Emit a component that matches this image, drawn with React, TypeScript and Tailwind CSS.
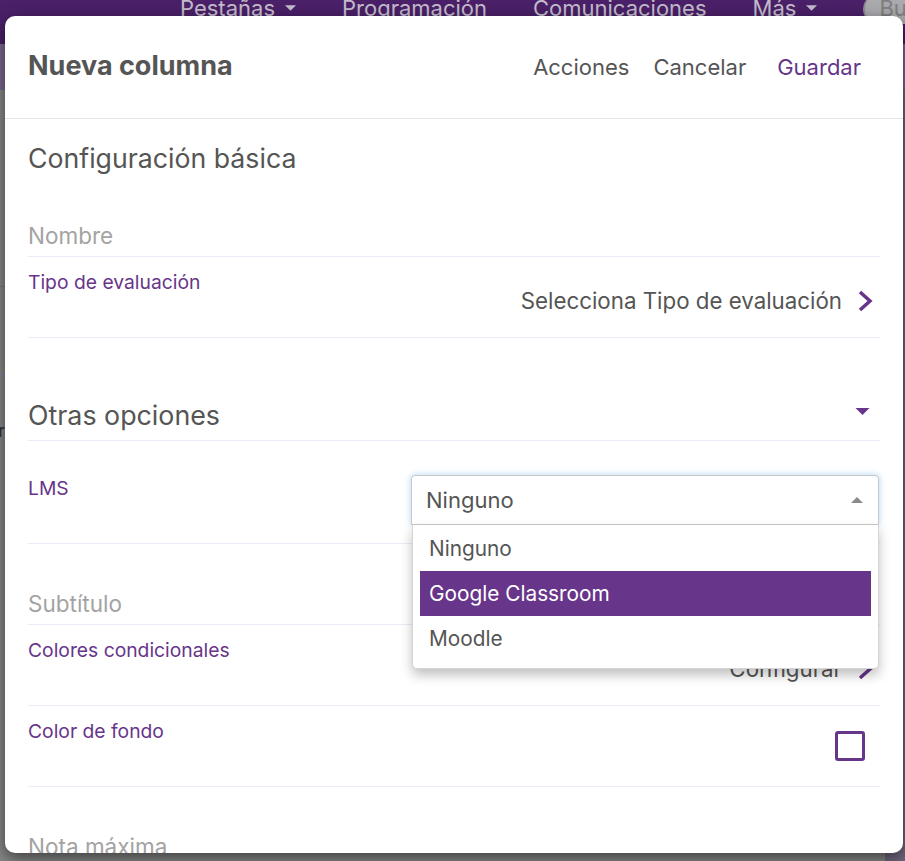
import { useState } from "react";

function TriangleDown({ className }: { className?: string }) {
  return (
    <svg viewBox="0 0 14 7" className={className} fill="currentColor">
      <path d="M0 0h14L7 7z" />
    </svg>
  );
}

function ChevronRight() {
  return (
    <svg viewBox="0 0 16 22" className="w-[16px] h-[22px] text-[#673589]" fill="none" stroke="currentColor" strokeWidth="3.5">
      <path d="M3 2l10 9-10 9" />
    </svg>
  );
}

export default function App() {
  const [lms, setLms] = useState("Ninguno");
  const [open, setOpen] = useState(true);
  const [bg, setBg] = useState(false);
  const options = ["Ninguno", "Google Classroom", "Moodle"];
  const hovered = "Google Classroom";

  return (
    <div className="relative w-[905px] h-[861px] overflow-hidden bg-[#878787] font-['Inter',sans-serif]">
      {/* dimmed page behind the dialog */}
      <div className="flex flex-col h-full">
        <div className="h-[44px] flex-none bg-[#4a2068] flex items-start pl-[180px] gap-[46px] text-[22px] leading-[28px] text-[#c3bccb] whitespace-nowrap">
          <span className="-mt-[6px] flex items-center gap-[10px]">
            Pestañas <TriangleDown className="w-[11px] h-[6px]" />
          </span>
          <span className="-mt-[6px]">Programación</span>
          <span className="-mt-[6px]">Comunicaciones</span>
          <span className="-mt-[6px] flex items-center gap-[10px]">
            Más <TriangleDown className="w-[11px] h-[6px]" />
          </span>
          <span className="-mt-[6px] flex-none h-[30px] w-[120px] rounded-full bg-[#aaa9ad] border-l-2 border-[#8d8a92] pl-[14px] text-[#7f7f7f]">
            Buscar
          </span>
        </div>
        <div className="h-[46px] flex-none bg-[#7b6891]" />
        <div className="flex-1 flex">
          <div className="flex-1 flex flex-col">
            <div className="h-[197px] border-b border-[#757575]" />
            <div className="h-[88px] border-b border-[#7890a8]" />
            <div className="pt-[44px] text-[18px] leading-[24px] text-[#333] flex justify-end w-[5px] overflow-hidden">
              <span>Mostrar</span>
            </div>
          </div>
          <div className="w-[20px] bg-[#72667d]" />
        </div>
      </div>

      {/* dialog */}
      <div className="absolute left-[5px] top-[16px] w-[898px] h-[837px] rounded-[10px] bg-white overflow-hidden shadow-[0_5px_16px_rgba(0,0,0,0.55)] flex flex-col text-[#555]">
        <div className="h-[103px] flex-none flex items-center border-b border-[#e3e3e3] pl-[23px] pr-[42px]">
          <h1 className="text-[27px] font-bold text-[#555] -mt-[2px]">Nueva columna</h1>
          <div className="ml-auto flex items-center text-[22px]">
            <button className="text-[#555]">Acciones</button>
            <button className="ml-[24px] text-[#555]">Cancelar</button>
            <button className="ml-[31px] text-[#673589]">Guardar</button>
          </div>
        </div>

        <div className="px-[23px] flex flex-col">
          <div className="pt-[26px] h-[56px] text-[26.7px] leading-[26px] text-[#555]">
            Configuración básica
          </div>

          <div className="pt-[49px] pb-[8px] border-b border-[#e8ecf6] text-[22.5px] leading-[24px] text-[#a3a3a3]">
            Nombre
          </div>

          <div className="pt-[13px] pb-[22px] border-b border-[#e8ecf6] flex flex-col">
            <span className="text-[19.3px] leading-[24px] text-[#673589]">Tipo de evaluación</span>
            <div className="-mt-[7px] h-[28px] flex items-center justify-end gap-[15px] pr-[7px]">
              <span className="text-[22.3px] leading-[28px] text-[#555]">Selecciona Tipo de evaluación</span>
              <ChevronRight />
            </div>
          </div>

          <div className="pt-[64px] pb-[12px] border-b border-[#e8ecf6] flex items-center">
            <span className="text-[26.8px] leading-[26px] text-[#555]">Otras opciones</span>
            <TriangleDown className="ml-auto mr-[10px] -mt-[8px] w-[15px] h-[7px] text-[#673589]" />
          </div>

          <div className="pt-[34px] pb-[18px] border-b border-[#e8ecf6] flex items-start">
            <span className="mt-[1px] text-[19.3px] leading-[24px] text-[#673589]">LMS</span>
            <div className="relative ml-auto mr-[1px] w-[468px]">
              <button
                onClick={() => setOpen(!open)}
                className="w-full h-[50px] flex items-center pl-[14px] pr-[15px] border border-[#c9c9c9] rounded-t-[4px] bg-white shadow-[0_0_6px_rgba(102,175,233,0.55)] text-[22px] text-[#555]"
              >
                <span>{lms}</span>
                <TriangleDown className="ml-auto w-[12px] h-[6px] rotate-180 text-[#8a8a8a]" />
              </button>
              {open && (
                <div className="absolute left-[1px] right-0 top-full z-10 bg-white border border-[#d5d5d5] border-t-0 rounded-b-[5px] px-[7px] pt-[1px] pb-[7px] shadow-[0_6px_12px_rgba(0,0,0,0.25)]">
                  {options.map((o) => (
                    <div
                      key={o}
                      onClick={() => {
                        setLms(o);
                        setOpen(false);
                      }}
                      className={
                        o === hovered
                          ? "h-[45px] flex items-center pl-[9px] text-[20.8px] bg-[#673589] text-white"
                          : "h-[45px] flex items-center pl-[9px] text-[20.8px] text-[#555]"
                      }
                    >
                      {o}
                    </div>
                  ))}
                </div>
              )}
            </div>
          </div>

          <div className="pt-[48px] pb-[8px] border-b border-[#e8ecf6] text-[22.5px] leading-[24px] text-[#a3a3a3]">
            Subtítulo
          </div>

          <div className="pt-[13px] pb-[22px] border-b border-[#e8ecf6] flex flex-col">
            <span className="text-[19.3px] leading-[24px] text-[#673589]">Colores condicionales</span>
            <div className="-mt-[7px] h-[28px] flex items-center justify-end gap-[15px] pr-[7px]">
              <span className="text-[22.3px] leading-[28px] text-[#555]">Configurar</span>
              <ChevronRight />
            </div>
          </div>

          <div className="pt-[13px] pb-[25px] border-b border-[#e8ecf6] flex flex-col">
            <span className="text-[19.3px] leading-[24px] text-[#673589]">Color de fondo</span>
            <button
              onClick={() => setBg(!bg)}
              className="-mt-[12px] self-end mr-[15px] w-[30px] h-[30px] border-[3px] border-[#673589] rounded-[3px] bg-white"
            >
              {bg && <span className="block w-full h-full bg-[#673589]" />}
            </button>
          </div>

          <div className="pt-[48px] pb-[8px] text-[22.5px] leading-[24px] text-[#a3a3a3]">
            Nota máxima
          </div>
        </div>
      </div>
    </div>
  );
}
